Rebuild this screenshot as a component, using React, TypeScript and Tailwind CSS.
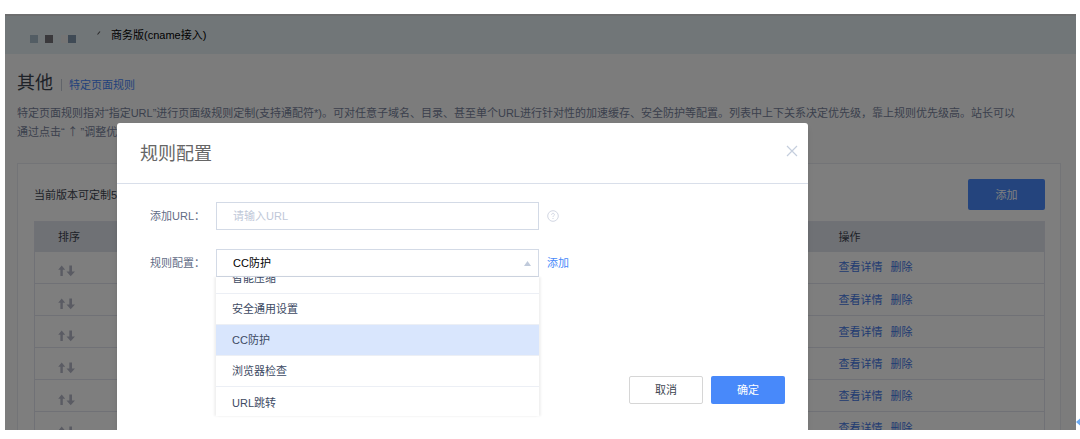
import { useState } from "react";

const ROWS = [1, 2, 3, 4, 5, 6];
const RULES = ["智能压缩", "安全通用设置", "CC防护", "浏览器检查", "URL跳转"];

function SortArrows() {
  return (
    <svg width="17" height="12" viewBox="0 0 17 12" className="mt-2 block fill-[#b4b7c6]" aria-hidden="true">
      <path d="M3.7 0.5 L7.2 4.8 H4.8 V11 H2.4 V4.8 H0.2 Z" />
      <path d="M11.3 0.5 H14 V6.5 H17 L12.7 11.3 L8.5 6.5 H11.3 Z" />
    </svg>
  );
}

function TopBar() {
  return (
    <header className="flex h-10 items-center border-t-2 border-[#dadcde] bg-[#e3ecf1] pl-[25px] text-black">
      <div className="mt-2 flex h-2 w-[66px] items-center">
        <span className="mr-[7px] h-2 w-2 bg-[#a6bac8]" />
        <span className="mr-2 h-2 w-2 bg-[#747378]" />
        <span className="h-2 w-[7px] bg-[#ebeaea]" />
        <span className="h-2 w-2 bg-[#7f95aa]" />
      </div>
      <svg width="6" height="6" viewBox="0 0 6 6" className="mr-2 mb-1" aria-hidden="true">
        <path d="M1.5 4.5 L4 1.5" stroke="#555" strokeWidth="1.1" fill="none" />
      </svg>
      <span className="pl-px">商务版(cname接入)</span>
    </header>
  );
}

function RulesPage() {
  return (
    <div className="bg-[#f9f9f9]">
      <TopBar />
      <div className="pr-[15px] pl-3">
        <div className="flex items-center pt-4">
          <h1 className="text-[18px] leading-[26px] text-[#3d4450]">其他</h1>
          <span className="mt-1 mr-[7px] ml-2 h-3 w-px bg-[#c3c8d4]" />
          <a href="#rules" className="mt-1 text-[#4584f6]">特定页面规则</a>
        </div>
        <p className="mt-2 text-[#76819a]">
          特定页面规则指对“指定URL”进行页面级规则定制(支持通配符*)。可对任意子域名、目录、甚至单个URL进行针对性的加速缓存、安全防护等配置。列表中上下关系决定优先级，靠上规则优先级高。站长可以
          <br />
          通过点击“<span className="font-['Noto_Sans_CJK_SC',sans-serif]"> ↑ </span>”调整优先级
        </p>

        <section className="mt-[22px] border border-[#e6e8ee] bg-[#fdfdfd] pt-[15px] pr-[15px] pl-4">
          <div className="flex items-center justify-between text-[#3d4450]">
            <span>当前版本可定制5条规则</span>
            <button type="button" className="h-[31px] w-[77px] rounded-[2px] bg-[#4889fa] text-white">
              添加
            </button>
          </div>
          <table className="mt-[11px] w-full border-collapse border border-[#e0e3ec] text-left">
            <thead>
              <tr className="h-[30px] bg-[#dfe2ea] text-[#3d4450]">
                <th className="pl-[23px] font-normal">排序</th>
                <th className="w-[229px] pl-[23px] font-normal">操作</th>
              </tr>
            </thead>
            <tbody>
              {ROWS.map((row) => (
                <tr key={row} className="h-8 border-b border-[#e0e3ec]">
                  <td className="pl-[23px]">
                    <SortArrows />
                  </td>
                  <td className="pl-[23px] text-[#4276e4]">
                    <a href="#detail" className="mr-2">查看详情</a>
                    <a href="#delete">删除</a>
                  </td>
                </tr>
              ))}
            </tbody>
          </table>
        </section>
      </div>
    </div>
  );
}

function RuleDialog() {
  const [rule, setRule] = useState("CC防护");

  return (
    <div
      role="dialog"
      aria-labelledby="dialog-title"
      className="mt-[109px] ml-28 flex w-[691px] flex-col rounded-t-[3px] bg-white shadow-md"
    >
      <div className="flex h-[61px] items-center justify-between border-b border-[#d9dfea] pr-[10px] pl-[23px]">
        <h2 id="dialog-title" className="pt-[2px] text-[18px] text-[#666]">规则配置</h2>
        <button type="button" aria-label="关闭" className="mb-1">
          <svg width="12" height="12" viewBox="0 0 12 12" fill="none" stroke="#c5cedd" strokeWidth="1.2">
            <path d="M1 1 L11 11 M11 1 L1 11" />
          </svg>
        </button>
      </div>

      <div className="flex flex-1 flex-col gap-[19px] pt-[18px] pl-[33px]">
        <div className="flex items-center">
          <label htmlFor="url" className="w-[66px] text-[#5f6b85]">添加URL：</label>
          <input
            id="url"
            type="text"
            placeholder="请输入URL"
            className="mr-2 h-7 w-[323px] border border-[#d3dae6] px-4 outline-none placeholder:text-[#c0c8d8]"
          />
          <svg width="12" height="12" viewBox="0 0 12 12" fill="none" stroke="#cdd3e0" aria-hidden="true">
            <circle cx="6" cy="6" r="5.3" strokeWidth="0.9" />
            <path d="M4.6 4.8 C4.6 2.8 7.4 2.9 7.4 4.6 C7.4 5.7 6 5.7 6 7" strokeWidth="0.9" />
            <path d="M6 8 V9" strokeWidth="1" />
          </svg>
        </div>

        <div className="flex items-center">
          <label htmlFor="rule" className="w-[66px] text-[#5f6b85]">规则配置：</label>
          <div className="relative mr-2 w-[323px]">
            <select
              id="rule"
              value={rule}
              onChange={(e) => setRule(e.target.value)}
              className="block h-7 w-full appearance-none border border-[#d3dae6] bg-white px-4 text-black outline-none"
            >
              {RULES.map((r) => (
                <option key={r}>{r}</option>
              ))}
            </select>
            <svg width="7" height="5" viewBox="0 0 7 5" className="absolute top-3 right-2 fill-[#c0cadb]" aria-hidden="true">
              <path d="M3.5 0 L7 5 H0 Z" />
            </svg>
            {/* Open list, scrolled so the first entry is cut */}
            <div className="absolute top-full left-0 w-full overflow-hidden bg-white shadow-[-2px_0_2px_rgba(0,0,0,0.06),2px_0_2px_rgba(0,0,0,0.06)]">
              <ul className="-mt-[14px] h-[153px]">
                {RULES.map((r) => (
                  <li
                    key={r}
                    onClick={() => setRule(r)}
                    className={`flex h-[31px] items-center border-b border-[#eceff5] px-4 text-[#3d4a63] last:border-b-0 ${
                      r === rule ? "bg-[#d9e6fd]" : "bg-white"
                    }`}
                  >
                    {r}
                  </li>
                ))}
              </ul>
            </div>
          </div>
          <a href="#add" className="text-[#4889fa]">添加</a>
        </div>
      </div>

      <div className="flex justify-end gap-2 pr-[23px] pb-[26px]">
        <button type="button" className="h-7 w-[74px] rounded-[2px] border border-[#d6d6d6] bg-white text-[#3d4450]">
          取消
        </button>
        <button type="button" className="h-7 w-[74px] rounded-[2px] bg-[#4889fa] text-white">
          确定
        </button>
      </div>
    </div>
  );
}

export default function App() {
  return (
    <div className="flex h-screen bg-white pt-[14px] pb-[9px] pl-[5px] font-['Liberation_Sans','Noto_Sans_CJK_SC',sans-serif] text-[11px] leading-[18px]">
      <div className="relative min-w-0 flex-1 overflow-hidden">
        <RulesPage />
        <div className="absolute inset-0 flex bg-black/50">
          <RuleDialog />
        </div>
      </div>
      <svg width="4" height="16" viewBox="0 0 4 16" className="self-end" aria-hidden="true">
        <path d="M0 8 L4 4.5 V11.5 Z" fill="#6aa9f2" />
      </svg>
    </div>
  );
}
